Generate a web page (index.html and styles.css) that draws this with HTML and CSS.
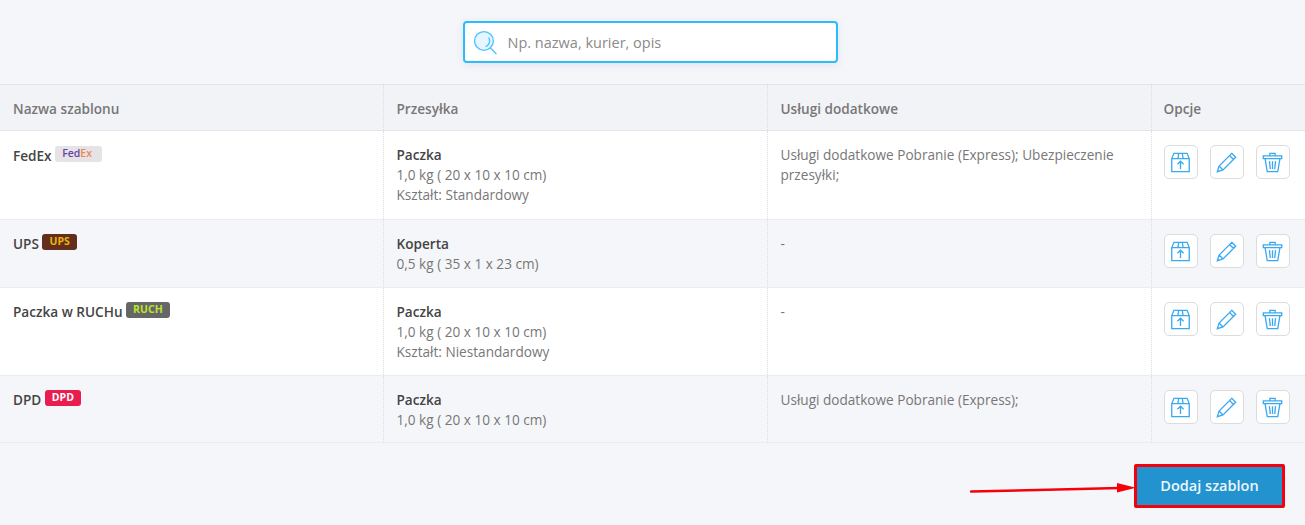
FILE: index.html
```html
<!DOCTYPE html>
<html lang="pl">
<head>
  <meta charset="UTF-8">
  <title>Szablony przesyłek</title>
  <link rel="stylesheet" href="styles.css">
</head>
<body>

  <svg width="0" height="0" class="defs">
    <symbol id="ico-box" viewBox="0 0 24 24">
      <path d="M4.500 1.500h15l2.500 6v15H2v-15z M2 7.500h20 M10 1.500 9 7.500 M14 1.500l1 6"/>
      <path d="M12 19.500v-9 M8.500 14 12 10.500l3.500 3.500"/>
    </symbol>
    <symbol id="ico-pen" viewBox="0 0 24 24">
      <path d="M18 1.500 22.500 6 8 20.500 1.500 22.500l2-6.500z M15.500 4l4.500 4.500 M3.500 16l4.500 4.500"/>
    </symbol>
    <symbol id="ico-bin" viewBox="0 0 24 24">
      <path d="M1.500 4.500h21v3h-21z M9 4.500V1.500h6v3"/>
      <path d="M3.500 7.500 6 22.500h12l2.500-15 M8.500 10.500l1 9 M15.500 10.500l-1 9 M12 10.500v9"/>
    </symbol>
  </svg>

  <!-- Search -->
  <div class="search-bar">
    <div class="search">
      <svg class="search-ico" viewBox="0 0 24 24">
        <circle cx="10.500" cy="10.500" r="9"/>
        <path d="M16.500 17l6 6 M15 7a6 6 0 0 1-3 9" class="thin"/>
      </svg>
      <span class="placeholder">Np. nazwa, kurier, opis</span>
    </div>
  </div>

  <!-- Templates -->
  <table class="templates">
    <thead>
      <tr>
        <th>Nazwa szablonu</th>
        <th>Przesyłka</th>
        <th>Usługi dodatkowe</th>
        <th>Opcje</th>
      </tr>
    </thead>
    <tbody>
      <tr class="tall">
        <td class="name">FedEx <span class="tag tag-fedex"><i>Fed</i><b>Ex</b></span></td>
        <td><strong>Paczka</strong><br>1,0 kg ( 20 x 10 x 10 cm)<br>Kształt: Standardowy</td>
        <td>Usługi dodatkowe Pobranie (Express); Ubezpieczenie przesyłki;</td>
        <td>
          <div class="options">
            <a class="opt"><svg><use href="#ico-box"/></svg></a>
            <a class="opt"><svg><use href="#ico-pen"/></svg></a>
            <a class="opt"><svg><use href="#ico-bin"/></svg></a>
          </div>
        </td>
      </tr>
      <tr class="short">
        <td class="name">UPS <span class="tag tag-ups">UPS</span></td>
        <td><strong>Koperta</strong><br>0,5 kg ( 35 x 1 x 23 cm)</td>
        <td>-</td>
        <td>
          <div class="options">
            <a class="opt"><svg><use href="#ico-box"/></svg></a>
            <a class="opt"><svg><use href="#ico-pen"/></svg></a>
            <a class="opt"><svg><use href="#ico-bin"/></svg></a>
          </div>
        </td>
      </tr>
      <tr class="tall">
        <td class="name">Paczka w RUCHu <span class="tag tag-ruch">RUCH</span></td>
        <td><strong>Paczka</strong><br>1,0 kg ( 20 x 10 x 10 cm)<br>Kształt: Niestandardowy</td>
        <td>-</td>
        <td>
          <div class="options">
            <a class="opt"><svg><use href="#ico-box"/></svg></a>
            <a class="opt"><svg><use href="#ico-pen"/></svg></a>
            <a class="opt"><svg><use href="#ico-bin"/></svg></a>
          </div>
        </td>
      </tr>
      <tr class="short">
        <td class="name">DPD <span class="tag tag-dpd">DPD</span></td>
        <td><strong>Paczka</strong><br>1,0 kg ( 20 x 10 x 10 cm)</td>
        <td>Usługi dodatkowe Pobranie (Express);</td>
        <td>
          <div class="options">
            <a class="opt"><svg><use href="#ico-box"/></svg></a>
            <a class="opt"><svg><use href="#ico-pen"/></svg></a>
            <a class="opt"><svg><use href="#ico-bin"/></svg></a>
          </div>
        </td>
      </tr>
    </tbody>
  </table>

  <div class="footer">
    <button class="add" type="button">Dodaj szablon</button>
    <!-- red arrow lies over the page -->
    <svg class="arrow" width="170" height="16" viewBox="0 0 170 16">
      <path d="M1 10.500 150 7" stroke="#f6000c" stroke-width="2.500" fill="none" stroke-linecap="round"/>
      <path d="M147 2 166 6.800 147 11.500z" fill="#f6000c"/>
    </svg>
  </div>

</body>
</html>
```

FILE: styles.css
```css
body {
  margin: 0;
  height: 525px;
  overflow: hidden;
  position: relative;
  font-family: "Open Sans", Arial, sans-serif;
  font-size: 13.6px;
  line-height: 20px;
  color: #777;
  background-color: #f5f6f9;
}

.defs {
  position: absolute;
}

.search-bar {
  display: flex;
  justify-content: center;
  padding: 21px 5px 21px 0;
}

.search {
  width: 375px;
  height: 42px;
  box-sizing: border-box;
  display: flex;
  align-items: center;
  padding-left: 8px;
  background-color: #fff;
  border: 2px solid #2cbcfb;
  border-radius: 4px;
  box-shadow: 0 2px 8px #dfe4ee;
}

.search-ico {
  width: 25px;
  height: 25px;
  margin-right: 10px;
  fill: #e6f6ff;
  stroke: #4cc3fb;
  stroke-width: 1.300;
}

.search-ico .thin {
  fill: none;
}

.placeholder {
  padding-top: 2px;
  font-size: 14.500px;
  color: #8a8a8a;
}

.templates {
  width: 100%;
  table-layout: fixed;
  border-collapse: collapse;
  border-top: 1px solid #e3e4e8;
  border-bottom: 1px solid #e3e4e8;
}

.templates th {
  height: 46px;
  padding: 3px 13px 0;
  box-sizing: border-box;
  text-align: left;
  font-weight: 600;
  color: #777;
  background-color: #f2f3f6;
  border-bottom: 1px solid #e3e4e8;
  border-right: 1px dotted #dcdde2;
}

.templates th:first-child,
.templates td:first-child {
  width: 383px;
}

.templates th:nth-child(2),
.templates td:nth-child(2),
.templates th:nth-child(3),
.templates td:nth-child(3) {
  width: 384px;
}

.templates th:last-child,
.templates td:last-child {
  border-right: none;
  padding-left: 12px;
}

.templates td {
  padding: 14px 13px 0;
  box-sizing: border-box;
  vertical-align: top;
  border-right: 1px dotted #dcdde2;
  border-bottom: 1px solid #ebecef;
}

.tall:first-child td.name {
  padding-top: 15px;
}

.tall {
  height: 88px;
  background-color: #fff;
}

.short {
  height: 68px;
  background-color: #f5f6f9;
}

.tall:first-child {
  height: 89px;
}

.short:last-child {
  height: 67px;
}

.templates td strong,
.templates td.name {
  font-weight: 600;
  color: #444;
}

.tag {
  display: inline-block;
  position: relative;
  top: -3px;
  height: 16px;
  padding: 0 7px;
  font-size: 10.500px;
  line-height: 15px;
  font-weight: 700;
  border-radius: 3px;
  vertical-align: middle;
}

.tag i {
  font-style: normal;
  font-weight: 600;
  color: #6a3fa5;
}

.tag b {
  font-weight: 600;
  color: #f28455;
}

.tag-fedex {
  padding-right: 10px;
  background-color: #e4e4e6;
}

.tag-ups {
  background-color: #632f1c;
  color: #e9b30e;
}

.tag-ruch {
  background-color: #666;
  color: #b9e52e;
}

.tag-dpd {
  background-color: #e91e4f;
  color: #fff;
}

.options {
  display: flex;
  gap: 12px;
}

.opt {
  width: 34px;
  height: 34px;
  box-sizing: border-box;
  display: flex;
  align-items: center;
  justify-content: center;
  background-color: #fff;
  border: 1px solid #dcdcdc;
  border-radius: 5px;
}

.opt svg {
  width: 21px;
  height: 21px;
  fill: none;
  stroke: #3ba9ef;
  stroke-width: 1.500;
}

.footer {
  display: flex;
  justify-content: flex-end;
  padding: 21px 20px 0 0;
}

.add {
  width: 151px;
  height: 44px;
  padding-bottom: 3px;
  box-sizing: border-box;
  font-family: inherit;
  font-size: 14.500px;
  font-weight: 600;
  color: #eef6fb;
  background-color: #2293cf;
  border: 3px solid #f6000c;
  border-radius: 2px;
}

.arrow {
  position: absolute;
  left: 970px;
  top: 481px;
}
```
